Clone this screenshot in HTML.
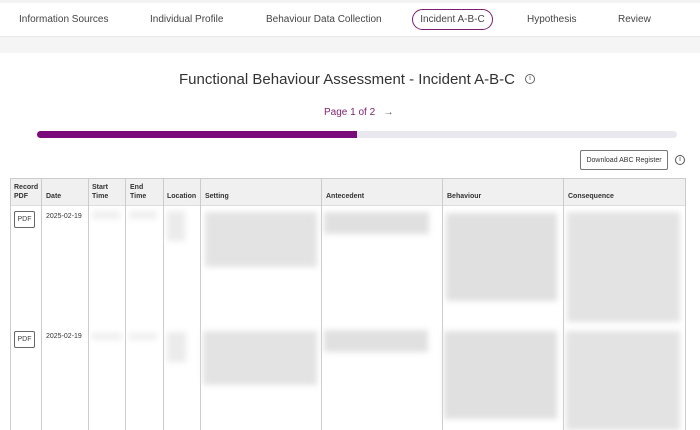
<!DOCTYPE html>
<html><head><style>
*{margin:0;padding:0;box-sizing:border-box}
body{width:700px;height:430px;overflow:hidden;background:#fff;font-family:"Liberation Sans",sans-serif;position:relative;color:#333}
.a{position:absolute}
.nav{font-size:10px;color:#444;top:14px}
.b{position:absolute;background:#e0e0e0;filter:blur(3px)}
.vl{position:absolute;top:178px;width:1px;height:252px;background:#ccc}
.h{position:absolute;font-size:7px;font-weight:bold;color:#333;line-height:9px}
.pdf{position:absolute;width:21px;height:17px;border:1px solid #666;border-radius:2px;font-size:7px;text-align:center;line-height:15px;color:#444}
.dt{position:absolute;font-size:7px;color:#333}
</style></head><body>
<div class="a" style="top:0;left:0;width:700px;height:3px;background:#f3f3f3"></div>
<div class="a nav" style="left:19px">Information Sources</div>
<div class="a nav" style="left:150px">Individual Profile</div>
<div class="a nav" style="left:266px">Behaviour Data Collection</div>
<div class="a" style="left:412px;top:9px;width:81px;height:21px;border:1px solid #7b1f70;border-radius:11px;font-size:10px;text-align:center;line-height:19px;color:#444">Incident A-B-C</div>
<div class="a nav" style="left:527px">Hypothesis</div>
<div class="a nav" style="left:618px">Review</div>
<div class="a" style="top:36px;left:0;width:700px;height:17px;background:#f5f5f5;border-top:1px solid #e8e8e8"></div>
<div class="a" style="top:71px;left:179px;font-size:15px;color:#333">Functional Behaviour Assessment - Incident A-B-C</div>
<div class="a" style="top:74px;left:525px;width:10px;height:10px;border:1px solid #666;border-radius:50%;font-size:7px;text-align:center;line-height:8px;color:#555">i</div>
<div class="a" style="top:107px;left:324px;font-size:10px;color:#7b1f70">Page 1 of 2 &nbsp;&nbsp;<span style="color:#555">→</span></div>
<div class="a" style="top:131px;left:37px;width:640px;height:7px;background:#e9e8ee;border-radius:4px"></div>
<div class="a" style="top:131px;left:37px;width:320px;height:7px;background:#7b0a7a;border-radius:4px 0 0 4px"></div>
<div class="a" style="top:150px;left:580px;width:88px;height:20px;border:1px solid #777;border-radius:2px;font-size:7px;text-align:center;line-height:19px;color:#333">Download ABC Register</div>
<div class="a" style="top:155px;left:675px;width:10px;height:10px;border:1px solid #555;border-radius:50%;font-size:7px;text-align:center;line-height:8px">i</div>
<div class="a" style="top:178px;left:10px;width:675px;height:28px;background:#f1f0f0;border-top:1px solid #ccc;border-bottom:1px solid #ddd"></div>
<div class="vl" style="left:10px"></div><div class="vl" style="left:41px"></div><div class="vl" style="left:88px"></div><div class="vl" style="left:125px"></div><div class="vl" style="left:163px"></div><div class="vl" style="left:200px"></div><div class="vl" style="left:321px"></div><div class="vl" style="left:442px"></div><div class="vl" style="left:563px"></div><div class="vl" style="left:685px"></div>
<div class="h" style="left:14px;top:183px">Record<br>PDF</div>
<div class="h" style="left:46px;top:192px">Date</div>
<div class="h" style="left:92px;top:183px">Start<br>Time</div>
<div class="h" style="left:130px;top:183px">End<br>Time</div>
<div class="h" style="left:167px;top:192px">Location</div>
<div class="h" style="left:205px;top:192px">Setting</div>
<div class="h" style="left:326px;top:192px">Antecedent</div>
<div class="h" style="left:447px;top:192px">Behaviour</div>
<div class="h" style="left:568px;top:192px">Consequence</div>
<div class="pdf" style="left:14px;top:211px">PDF</div>
<div class="dt" style="left:46px;top:213px">2025-02-19</div>
<div class="pdf" style="left:14px;top:331px">PDF</div>
<div class="dt" style="left:46px;top:333px">2025-02-19</div>
<div class="b" style="left:92px;top:211px;width:28px;height:8px;background:#efefef"></div>
<div class="b" style="left:129px;top:211px;width:28px;height:8px;background:#efefef"></div>
<div class="b" style="left:167px;top:211px;width:18px;height:30px;background:#ebebeb"></div>
<div class="b" style="left:205px;top:212px;width:112px;height:55px;background:#e3e3e3"></div>
<div class="b" style="left:324px;top:212px;width:105px;height:22px"></div>
<div class="b" style="left:446px;top:213px;width:111px;height:88px"></div>
<div class="b" style="left:567px;top:212px;width:113px;height:110px;background:#e3e3e3"></div>
<div class="b" style="left:92px;top:333px;width:30px;height:7px;background:#efefef"></div>
<div class="b" style="left:129px;top:333px;width:28px;height:7px;background:#efefef"></div>
<div class="b" style="left:167px;top:332px;width:19px;height:30px;background:#ebebeb"></div>
<div class="b" style="left:203px;top:331px;width:114px;height:54px;background:#e3e3e3"></div>
<div class="b" style="left:324px;top:330px;width:104px;height:22px"></div>
<div class="b" style="left:444px;top:331px;width:113px;height:88px"></div>
<div class="b" style="left:566px;top:331px;width:114px;height:99px;background:#e3e3e3"></div>
</body></html>
